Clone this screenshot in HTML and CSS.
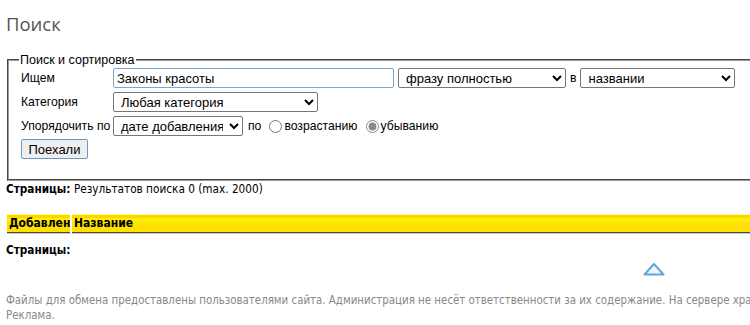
FILE: index.html
```html
<!DOCTYPE html>
<html lang="ru">
<head>
  <meta charset="UTF-8" />
  <title>Поиск</title>
  <link rel="stylesheet" href="styles.css">
</head>
<body>
<div class="page">
  <h1 class="title">Поиск</h1>

  <form class="search-form" onsubmit="return false;">
    <fieldset>
      <legend>Поиск и сортировка</legend>
      <div class="form-grid">
        <label>Ищем</label>
        <div class="field-row">
          <input type="text" class="query" value="Законы красоты">
          <select class="mode">
            <option>фразу полностью</option>
          </select>
          <span>в</span>
          <select class="where">
            <option>названии</option>
          </select>
        </div>

        <label>Категория</label>
        <div class="field-row">
          <select class="category">
            <option>Любая категория</option>
          </select>
        </div>

        <label>Упорядочить по</label>
        <div class="field-row">
          <select class="order">
            <option>дате добавления</option>
          </select>
          <span class="by">по</span>
          <label class="radio"><input type="radio" name="dir"> возрастанию</label>
          <label class="radio"><input type="radio" name="dir" checked> убыванию</label>
        </div>
      </div>
      <button class="go">Поехали</button>
    </fieldset>
  </form>

  <p class="pages"><b>Страницы:</b> Результатов поиска 0 (max. 2000)</p>

  <div class="results-head">
    <div class="col-date">Добавлен</div>
    <div class="col-name">Название</div>
  </div>

  <p class="pages pages-bottom"><b>Страницы:</b></p>

  <div class="to-top">
    <svg width="22" height="14" viewBox="0 0 22 14">
      <path d="M1.5 12.5 L11 2 L20.5 12.5 Z" fill="#f1f5fb" stroke="#5ea6dc" stroke-width="2" stroke-linejoin="round"/>
    </svg>
  </div>

  <div class="footer">
    Файлы для обмена предоставлены пользователями сайта. Администрация не несёт ответственности за их содержание. На сервере хранятся только ссылки на файлы.<br>
    Реклама.
  </div>
</div>
</body>
</html>
```

FILE: styles.css
```css
html, body {
  margin: 0;
  overflow: hidden;
}

body {
  font-family: "Liberation Sans", Arial, sans-serif;
  font-size: 12.2px;
  color: #000;
  background: #fff;
}

.page {
  width: 1000px;
  padding: 0 6px;
}

.title {
  font-family: "Open Sans", "Noto Sans", sans-serif;
  font-weight: normal;
  font-size: 18.5px;
  line-height: 24px;
  color: #555;
  margin: 0;
  padding-top: 12px;
  height: 41px;
}

.search-form {
  margin: 0;
}

fieldset {
  margin: 0 0 0 1px;
  padding: 1px 12px 20px 12px;
  border: 2px groove #9a9a9a;
}

legend {
  padding: 0 1px;
  margin-left: -2px;
  font-size: 12.5px;
}

.form-grid {
  display: grid;
  grid-template-columns: 92px auto;
  row-gap: 4px;
  align-items: center;
}

.form-grid > label {
  white-space: nowrap;
}

.field-row {
  display: flex;
  align-items: center;
  gap: 4px;
}

input[type="text"], select, button {
  font-family: "Liberation Sans", Arial, sans-serif;
  font-size: 13px;
  height: 20px;
  box-sizing: border-box;
  border: 1px solid #767676;
  border-radius: 2px;
  background: #fff;
  color: #000;
  padding: 0 3px;
  margin: 0;
}

input.query {
  width: 281px;
  border-color: #7aa7d6;
}

select.mode { width: 168px; }
select.where { width: 155px; }
select.category { width: 205px; }
select.order { width: 130px; }

.by {
  margin-left: 1px;
}

.radio {
  display: flex;
  align-items: center;
}

.radio input {
  margin: 0 2px 0 4px;
  width: 13px;
  height: 13px;
  accent-color: #8a8a8a;
}

button.go {
  margin-top: 3px;
  width: 67px;
  background: #efefef;
  border-color: #6c98c8;
  padding: 0 6px;
}

.pages {
  font-family: "DejaVu Sans Condensed", "DejaVu Sans", sans-serif;
  font-size: 11.7px;
  line-height: 13px;
  margin: 2px 0 0 0;
  height: 31px;
}

.results-head {
  display: flex;
  gap: 2px;
  margin-left: 1px;
  height: 20px;
  font-family: "DejaVu Sans Condensed", "DejaVu Sans", sans-serif;
  font-size: 12px;
  font-weight: bold;
}

.results-head div {
  display: flex;
  align-items: center;
  padding: 0 0 2px 2px;
  box-sizing: border-box;
  background: linear-gradient(#ffff90 0, #ffff90 1px, #ffd400 1px, #ffd400 4px, #fff200 4px, #fff200 7px, #ffe000 9px, #ffe000 18px, #4f4f30 18px, #4f4f30 19px, #c8c8c8 19px);
}

.col-date { width: 63px; }
.col-name { flex: 1; }

.pages-bottom {
  margin-top: 10px;
  height: 18px;
}

.to-top {
  display: flex;
  justify-content: center;
  padding-left: 548px;
  width: 200px;
  height: 31px;
}

.footer {
  font-family: "DejaVu Sans Condensed", "DejaVu Sans", sans-serif;
  font-size: 11.4px;
  color: #888;
  white-space: nowrap;
  line-height: 15px;
}
```
